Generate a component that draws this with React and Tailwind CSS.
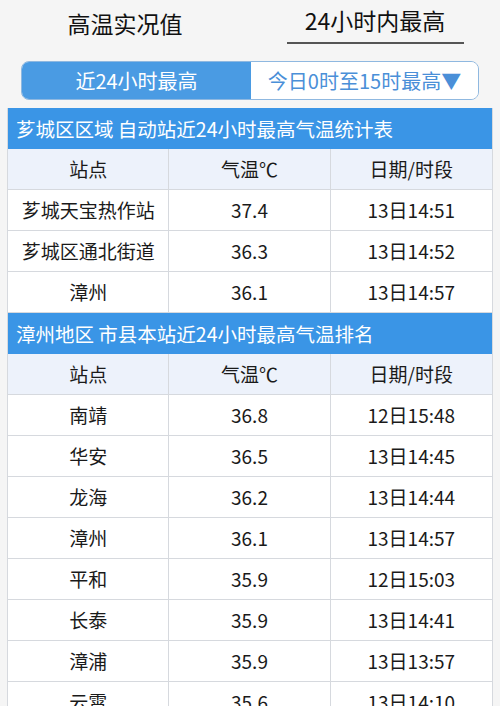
import React from 'react';

const font = { fontFamily: '"Noto Sans CJK SC", "Noto Sans", sans-serif' };

const cityRows = [
  ['芗城天宝热作站', '37.4', '13日14:51'],
  ['芗城区通北街道', '36.3', '13日14:52'],
  ['漳州', '36.1', '13日14:57'],
];

const countyRows = [
  ['南靖', '36.8', '12日15:48'],
  ['华安', '36.5', '13日14:45'],
  ['龙海', '36.2', '13日14:44'],
  ['漳州', '36.1', '13日14:57'],
  ['平和', '35.9', '12日15:03'],
  ['长泰', '35.9', '13日14:41'],
  ['漳浦', '35.9', '13日13:57'],
  ['云霄', '35.6', '13日14:10'],
];

function Section({ title, rows }) {
  return (
    <div>
      <div className="h-[41px] bg-[#3a95e6] text-white text-[19.5px] flex items-center pl-[8px]">{title}</div>
      <div className="grid grid-cols-3 h-[41px] bg-[#edf2fb] text-[#1a1a1a] text-[19px] border-b border-[#d6d9de]">
        <div className="flex items-center justify-center border-r border-[#d6d9de]">站点</div>
        <div className="flex items-center justify-center border-r border-[#d6d9de]">气温℃</div>
        <div className="flex items-center justify-center">日期/时段</div>
      </div>
      {rows.map((r, i) => (
        <div key={i} className="grid grid-cols-3 h-[41px] bg-white text-[#1a1a1a] text-[19px] border-b border-[#d6d9de]">
          <div className="flex items-center justify-center border-r border-[#d6d9de]">{r[0]}</div>
          <div className="flex items-center justify-center border-r border-[#d6d9de]">{r[1]}</div>
          <div className="flex items-center justify-center">{r[2]}</div>
        </div>
      ))}
    </div>
  );
}

export default function App() {
  return (
    <div className="w-[500px] h-[706px] overflow-hidden bg-[#f5f5f5]" style={font}>
      <div className="flex h-[52px]">
        <div className="w-1/2 flex items-center justify-center text-[23px] text-[#111] pb-[6px]">高温实况值</div>
        <div className="w-1/2 flex justify-center">
          <div className="w-[177px] h-[44px] border-b-2 border-[#555] flex items-center justify-center text-[23px] text-[#111] pb-[2px]">
            24小时内最高
          </div>
        </div>
      </div>
      <div className="px-[21px] pt-[9px]">
        <div className="flex h-[39px] rounded-[8px] border border-[#8fb8e0] overflow-hidden text-[20px]">
          <div className="w-[229px] bg-[#4a9be3] text-white flex items-center justify-center">近24小时最高</div>
          <div className="flex-1 bg-white text-[#4a8fd8] flex items-center justify-center whitespace-nowrap">今日0时至15时最高▼</div>
        </div>
      </div>
      <div className="mx-[7px] mt-[8px] border-l border-r border-[#d6d9de]">
        <Section title="芗城区区域 自动站近24小时最高气温统计表" rows={cityRows} />
        <Section title="漳州地区 市县本站近24小时最高气温排名" rows={countyRows} />
      </div>
    </div>
  );
}
